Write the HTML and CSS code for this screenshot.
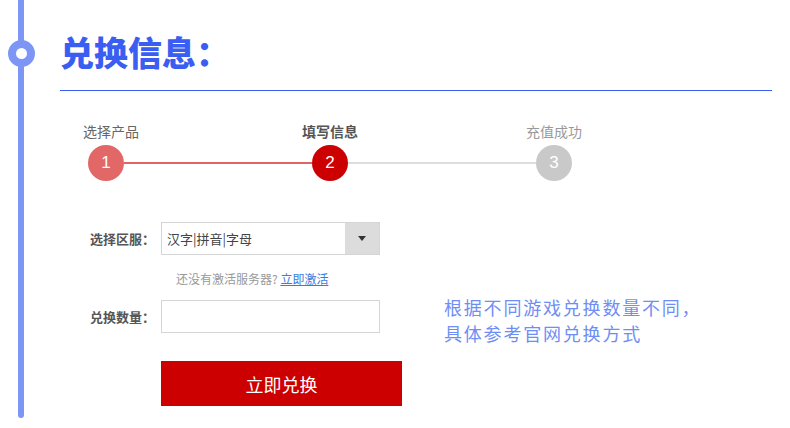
FILE: index.html
```html
<!DOCTYPE html>
<html lang="zh-CN">
<head>
<meta charset="utf-8">
<title>兑换信息</title>
<link rel="stylesheet" href="styles.css">
</head>
<body>
<div class="page">
  <div class="rail"><span class="rail-dot"></span></div>
  <div class="content">
    <h1 class="title">兑换信息：</h1>
    <div class="steps">
      <div class="step done first">
        <span class="step-label">选择产品</span>
        <span class="step-num">1</span>
      </div>
      <div class="step-line done"></div>
      <div class="step current">
        <span class="step-label">填写信息</span>
        <span class="step-num">2</span>
      </div>
      <div class="step-line"></div>
      <div class="step todo">
        <span class="step-label">充值成功</span>
        <span class="step-num">3</span>
      </div>
    </div>
    <div class="form-area">
      <div class="form">
        <div class="form-row">
          <label class="form-label">选择区服：</label>
          <div class="select">
            <span class="select-text">汉字|拼音|字母</span>
            <span class="select-btn"><span class="caret"></span></span>
          </div>
        </div>
        <div class="hint">还没有激活服务器? <a class="hint-link" href="#">立即激活</a></div>
        <div class="form-row row-qty">
          <label class="form-label">兑换数量：</label>
          <div class="input"></div>
        </div>
        <div class="submit-row">
          <button class="submit">立即兑换</button>
        </div>
      </div>
      <div class="note">
        <p class="note-line">根据不同游戏兑换数量不同，</p>
        <p class="note-line">具体参考官网兑换方式</p>
      </div>
    </div>
  </div>
</div>
</body>
</html>
```

FILE: styles.css
```css
* { box-sizing: border-box; }
html, body { margin: 0; padding: 0; background: #fff; }
body {
  font-family: "Noto Sans CJK SC", "Noto Sans", "Liberation Sans", sans-serif;
  color: #333;
}
.page {
  display: flex;
  padding-left: 18px;
  width: 790px;
  height: 428px;
}
.rail {
  position: relative;
  flex: 0 0 6px;
  height: 418px;
  background: #7d96f6;
  border-radius: 0 0 3px 3px;
}
.rail-dot {
  position: absolute;
  top: 40px;
  left: -10.5px;
  width: 27px;
  height: 27px;
  border-radius: 50%;
  border: 8px solid #7d96f6;
  background: #fff;
}
.content {
  margin-left: 36px;
  width: 712px;
}
.title {
  margin: 0;
  padding-top: 28px;
  padding-bottom: 14px;
  height: 91px;
  line-height: 48px;
  font-size: 34px;
  font-weight: 900;
  color: #3a5ef2;
  border-bottom: 1px solid #3a5ef2;
}
.steps {
  display: flex;
  margin-top: 31px;
  margin-left: 28px;
}
.step {
  display: flex;
  flex-direction: column;
  align-items: center;
  width: 36px;
}
.step-label {
  white-space: nowrap;
  font-size: 14px;
  line-height: 18px;
  height: 18px;
  color: #666;
}
.step.first .step-label { margin-left: 10px; }
.step.current .step-label { font-weight: 700; color: #555; }
.step.todo .step-label { color: #999; }
.step-num {
  margin-top: 5px;
  width: 36px;
  height: 36px;
  border-radius: 50%;
  display: flex;
  align-items: center;
  justify-content: center;
  font-family: "Liberation Sans", Arial, sans-serif;
  font-size: 17px;
  color: #fff;
  background: #e26767;
}
.step.current .step-num { background: #cc0000; }
.step.todo .step-num { background: #c9c9c9; }
.step-line {
  width: 188px;
  height: 2px;
  align-self: flex-end;
  margin-bottom: 17px;
  background: #dddddd;
}
.step-line.done { background: #e06464; }
.form-area {
  display: flex;
  margin-top: 41px;
}
.form { width: 342px; }
.form-row {
  display: flex;
  align-items: center;
}
.form-label {
  width: 95px;
  margin-right: 6px;
  text-align: right;
  font-size: 13px;
  font-weight: 700;
  color: #555;
  white-space: nowrap;
}
.select {
  display: flex;
  width: 219px;
  height: 33px;
  border: 1px solid #d5d5d5;
}
.select-text {
  flex: 1;
  padding-left: 5px;
  font-size: 13px;
  line-height: 31px;
  color: #444;
}
.select-btn {
  width: 34px;
  background: #dcdcdc;
  display: flex;
  align-items: center;
  justify-content: center;
}
.caret {
  width: 0;
  height: 0;
  border-left: 4.5px solid transparent;
  border-right: 4.5px solid transparent;
  border-top: 5px solid #333;
}
.hint {
  margin-top: 15px;
  margin-left: 116px;
  font-size: 12px;
  line-height: 18px;
  color: #999;
  white-space: nowrap;
}
.hint-link { color: #3b7ddb; text-decoration: underline; }
.row-qty { margin-top: 12px; }
.input {
  width: 219px;
  height: 33px;
  border: 1px solid #d5d5d5;
  background: #fff;
}
.submit-row {
  margin-top: 28px;
  padding-left: 101px;
}
.submit {
  display: block;
  width: 241px;
  height: 45px;
  border: 0;
  padding: 0;
  background: #cc0000;
  color: #fff;
  font-family: inherit;
  font-size: 18px;
}
.note {
  margin-left: 42px;
  margin-top: 72px;
  color: #6f8ef5;
  white-space: nowrap;
}
.note-line {
  margin: 0;
  font-size: 18px;
  letter-spacing: 1.8px;
  line-height: 26px;
  height: 26px;
}
```
